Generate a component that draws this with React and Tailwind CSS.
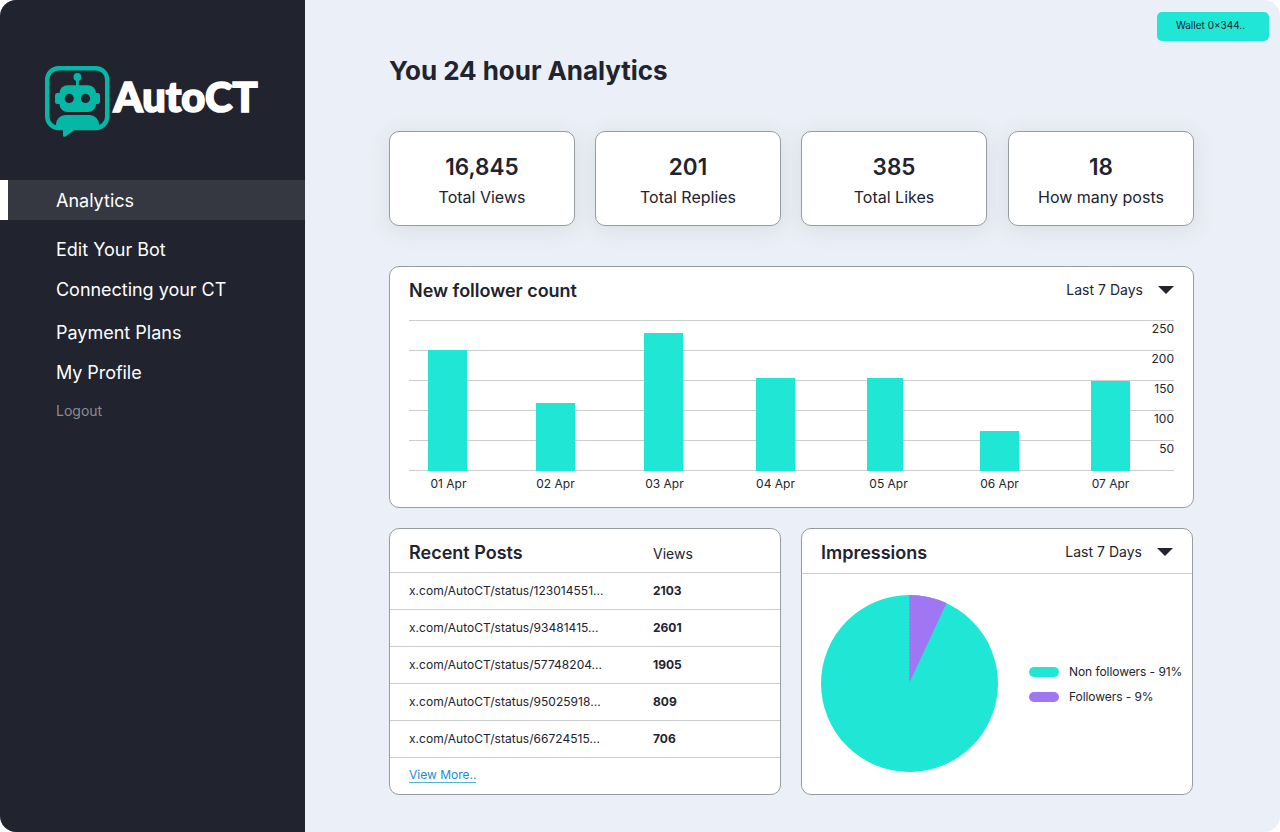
import { useState } from 'react'

const navItems = [
  { label: 'Edit Your Bot', className: 'mt-[9px]' },
  { label: 'Connecting your CT', className: 'tracking-[-0.03px]' },
  { label: 'Payment Plans', className: 'mt-[3px]' },
  { label: 'My Profile', className: 'tracking-[-0.06px]' },
]

const stats = [
  { value: '16,845', label: 'Total Views' },
  { value: '201', label: 'Total Replies' },
  { value: '385', label: 'Total Likes' },
  { value: '18', label: 'How many posts' },
]

const scale = [250, 200, 150, 100, 50]

const days = [
  { day: '01 Apr', height: 121, column: 'ml-[19px] w-[39px]', text: 'left-px' },
  { day: '02 Apr', height: 68, column: 'ml-[69px] w-[39px]', text: 'left-0' },
  { day: '03 Apr', height: 138, column: 'ml-[69px] w-[39px]', text: 'left-px' },
  { day: '04 Apr', height: 93, column: 'ml-[73px] w-[39px]', text: 'left-0' },
  { day: '05 Apr', height: 93, column: 'ml-[72px] w-[36px]', text: 'left-[3.5px]' },
  { day: '06 Apr', height: 40, column: 'ml-[77px] w-[39px]', text: 'left-0' },
  { day: '07 Apr', height: 90, column: 'ml-[72px] w-[39px]', text: 'left-0' },
]

const posts = [
  { url: 'x.com/AutoCT/status/123014551...', views: 2103 },
  { url: 'x.com/AutoCT/status/93481415...', views: 2601 },
  { url: 'x.com/AutoCT/status/57748204...', views: 1905 },
  { url: 'x.com/AutoCT/status/95025918...', views: 809 },
  { url: 'x.com/AutoCT/status/66724515...', views: 706 },
]

function Logo() {
  return (
    <svg width="220" height="76" viewBox="42 63 220 76" className="block">
      <rect x="47.2" y="68.2" width="60" height="59.8" rx="11.5" fill="none" stroke="#05b8a5" strokeWidth="4.4" />
      <path d="M63 128h14l-11.5 8.400c-1.2.9-2.500.4-2.500-1z" fill="#05b8a5" />
      <path d="M56 129v-4.500a9.500 9.500 0 0 1 9.500-9.500h24a9.500 9.500 0 0 1 9.500 9.500v4.500z" fill="#05b8a5" />
      <circle cx="77.400" cy="77" r="3.900" fill="#05b8a5" />
      <rect x="76" y="79" width="2.800" height="8" fill="#05b8a5" />
      <rect x="55" y="93" width="45" height="11" rx="2.500" fill="#05b8a5" />
      <rect x="59.500" y="85.200" width="36.500" height="26.800" rx="8" fill="#05b8a5" />
      <circle cx="69.200" cy="98.400" r="4.600" fill="#21232e" />
      <circle cx="85.500" cy="98.400" r="4.600" fill="#21232e" />
      <text
        x="113.5"
        y="112.300"
        textLength="144"
        lengthAdjust="spacingAndGlyphs"
        stroke="#fff"
        strokeWidth="1.7"
        className="fill-white font-['Lato'] text-[41px] font-black"
      >
        AutoCT
      </text>
    </svg>
  )
}

function RangePicker() {
  const [open, setOpen] = useState(false)

  return (
    <button onClick={() => setOpen(!open)} className="flex items-center gap-[15px] text-[14px] leading-5 tracking-[0.02px]">
      Last 7 Days
      <svg width="16" height="8" viewBox="0 0 16 8">
        <path d="M0 0h16L8 8z" fill="#21232e" />
      </svg>
    </button>
  )
}

export default function App() {
  return (
    <div className="h-[832px] w-[1280px] bg-white font-['Inter',sans-serif] text-[#21232e]">
      <div className="flex h-full overflow-hidden rounded-[16px] bg-[#ebeff7]">
        {/* Sidebar */}
        <aside className="w-[305px] shrink-0 bg-[#21232e] text-white">
          <div className="h-[180px] pt-[63px] pl-[42px]">
            <Logo />
          </div>
          <nav className="text-[18px]">
            <a className="flex h-10 items-center border-l-8 border-white bg-[#363841] pl-12">Analytics</a>
            {navItems.map((item) => (
              <a key={item.label} className={`flex h-10 items-center pl-14 ${item.className}`}>
                {item.label}
              </a>
            ))}
            <a className="flex h-9 items-center pl-14 text-[14px] text-[#8b8c92]">Logout</a>
          </nav>
        </aside>

        <main className="relative flex-1 pt-[52px] pl-[84px]">
          <button className="absolute top-3 right-[11px] h-[29px] w-[112px] rounded-[5px] bg-[#20e6d5] pr-[5px] pb-[2px] text-[10px]">
            Wallet 0×344..
          </button>

          <h1 className="h-[79px] text-[26px] leading-[38px] font-bold tracking-[-0.06px]">You 24 hour Analytics</h1>

          {/* Totals */}
          <section className="flex w-[805px] gap-5">
            {stats.map((stat) => (
              <div
                key={stat.label}
                className="flex h-[95px] w-[186px] flex-col items-center rounded-[10px] border border-[#979ca1] bg-white pt-[19px] shadow-[0_4px_20px_rgba(190,205,200,0.45)] last:ml-px"
              >
                <p className="text-[22.5px] leading-8 font-semibold">{stat.value}</p>
                <p className="mt-[2px] text-[16px] leading-6">{stat.label}</p>
              </div>
            ))}
          </section>

          {/* Follower chart */}
          <section className="mt-10 h-[242px] w-[805px] rounded-[10px] border border-[#979ca1] bg-white px-[19px]">
            <div className="flex h-[53px] items-start justify-between pt-[10px]">
              <h2 className="text-[18px] leading-7 font-semibold tracking-[-0.02px]">New follower count</h2>
              <div className="pt-[3px]">
                <RangePicker />
              </div>
            </div>
            <div className="relative h-[151px]">
              {scale.map((n) => (
                <div key={n} className="h-[30px] border-t border-[#cbcccd] text-right text-[12px] leading-[15px]">
                  {n}
                </div>
              ))}
              <div className="border-t border-[#cbcccd]" />
              <div className="absolute inset-0 flex items-end">
                {days.map((d) => (
                  <div key={d.day} className={`bg-[#20e6d5] ${d.column}`} style={{ height: d.height }} />
                ))}
              </div>
            </div>
            <div className="flex pt-[5px] text-[12px] leading-4">
              {days.map((d) => (
                <div key={d.day} className={`flex justify-center whitespace-nowrap ${d.column}`}>
                  <span className={`relative ${d.text}`}>{d.day}</span>
                </div>
              ))}
            </div>
          </section>

          <div className="mt-5 flex gap-5">
            {/* Posts */}
            <section className="h-[267px] w-[392px] rounded-[10px] border border-[#979ca1] bg-white">
              <div className="flex h-[43px] items-center pl-[19px]">
                <h2 className="w-[244px] pt-1 text-[18px] font-semibold">Recent Posts</h2>
                <span className="pt-[5px] text-[14px]">Views</span>
              </div>
              {posts.map((post) => (
                <div key={post.url} className="flex h-[37px] items-center border-t border-[#cbcccd] pl-[19px] text-[12px]">
                  <span className="w-[244px] tracking-[0.03px]">{post.url}</span>
                  <span className="font-bold">{post.views}</span>
                </div>
              ))}
              <div className="border-t border-[#cbcccd] pt-[10px] pl-[19px] text-[12px] leading-[14px]">
                <a className="inline-block border-b border-[#55b5cf] text-[#1d8ccb]">View More..</a>
              </div>
            </section>

            {/* Impressions */}
            <section className="h-[267px] w-[392px] rounded-[10px] border border-[#979ca1] bg-white">
              <div className="flex h-[45px] items-center justify-between border-b border-[#cbcccd] px-[19px]">
                <h2 className="pt-[3px] text-[18px] font-semibold">Impressions</h2>
                <div className="pt-[2px]">
                  <RangePicker />
                </div>
              </div>
              <div className="flex pt-[21px] pl-[19px]">
                <svg width="177" height="177" viewBox="0 0 177 177" className="shrink-0">
                  <circle cx="88.5" cy="88.5" r="88.5" fill="#20e6d5" />
                  <path d="M88.5 87.500V0A88.500 88.500 0 0 1 125.500 8.100Z" fill="#a076f2" />
                  <path d="M88.500 0V87" stroke="#6f8fc8" strokeDasharray="1 2" />
                </svg>
                <div className="space-y-[9px] pt-[69px] pl-[31px] text-[12px] leading-4 tracking-[-0.07px]">
                  <div className="flex items-center gap-[10px]">
                    <span className="h-[10px] w-[30px] rounded-[5px] bg-[#20e6d5]" />
                    Non followers - 91%
                  </div>
                  <div className="flex items-center gap-[10px]">
                    <span className="h-[10px] w-[30px] rounded-[5px] bg-[#a076f2]" />
                    Followers - 9%
                  </div>
                </div>
              </div>
            </section>
          </div>
        </main>
      </div>
    </div>
  )
}
